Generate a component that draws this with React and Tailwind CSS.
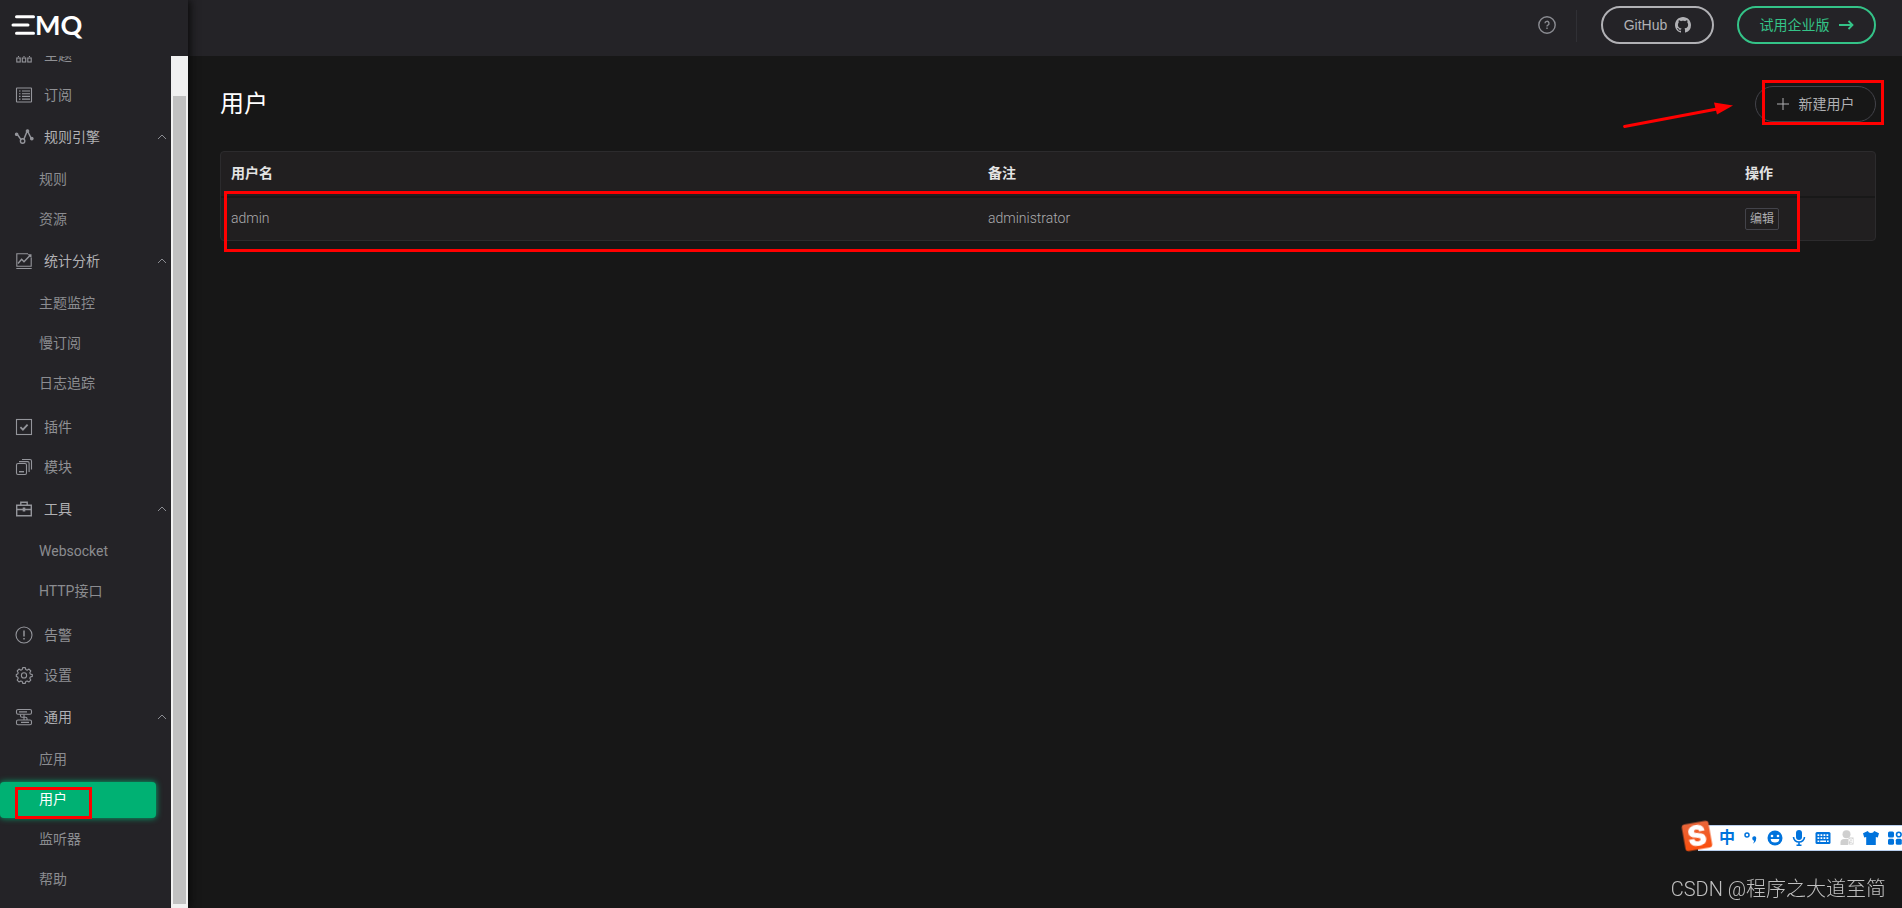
import React, { useState } from "react";
import clsx from "clsx";

const icons = {
  topics: (
    <>
      <path d="M8 1v5M2.5 10V6h11v4M8 6v4" />
      <rect x="0.8" y="11" width="3.4" height="4" />
      <rect x="6.3" y="11" width="3.4" height="4" />
      <rect x="11.8" y="11" width="3.4" height="4" />
    </>
  ),
  subscriptions: (
    <>
      <rect x="0.5" y="1" width="15" height="14" rx="0.5" />
      <path d="M3 4h1.5M6 4h8M3 6.7h1.5M6 6.7h8M3 9.4h1.5M6 9.4h8M3 12.1h1.5M6 12.1h8" />
    </>
  ),
  rules: (
    <>
      <path d="M1.6 5.8L5 10.6M8 10L10.8 3M12 3l3 6" strokeWidth="1.5" />
      <circle cx="6.6" cy="12" r="2.2" strokeWidth="1.4" />
      <circle cx="0.6" cy="5.2" r="1.2" fill="currentColor" />
      <circle cx="11.5" cy="2" r="1.3" fill="currentColor" />
      <circle cx="15.8" cy="9.6" r="1.3" fill="currentColor" />
    </>
  ),
  analysis: (
    <>
      <path d="M12 0.8H0.8v12.4h14.4V5M0.3 15.5h15.4" />
      <path d="M2 10.5l3.6-4.2 2.4 2.5L14 2.4" strokeWidth="1.4" />
      <path d="M11.5 1.2h4v4z" fill="currentColor" stroke="none" />
    </>
  ),
  plugins: (
    <>
      <rect x="0.5" y="0.5" width="15" height="15" />
      <path d="M4.4 8.2l2.5 2.4 4.7-5" strokeWidth="1.8" />
    </>
  ),
  modules: (
    <>
      <rect x="0.5" y="4.5" width="10" height="11" rx="1.5" />
      <path d="M3 2.6h8.6q1.5 0 1.5 1.5v9M6 0.5h8q1.5 0 1.5 1.5v8.5" />
      <path d="M3 12.7h5" strokeWidth="1.4" />
    </>
  ),
  tools: (
    <>
      <path d="M0.7 4.2h14.6v10.5H0.7zM4.8 4V1.2h6.4V4M1 8.5h14" strokeWidth="1.4" />
      <path d="M8 6.5v4" strokeWidth="2.6" />
    </>
  ),
  alarms: (
    <>
      <circle cx="8" cy="8" r="8" />
      <path d="M8 3.5v6M8 11v1.6" strokeWidth="1.5" />
    </>
  ),
  settings: (
    <>
      <path d="M6.7 0.6h2.6l.5 2 1.3.6 1.9-1.1 1.8 1.9-1 1.8.5 1.2 2 .6v1.8l-2 .6-.5 1.2 1 1.9-1.8 1.8-1.9-1-1.3.5-.5 2H6.7l-.5-2-1.3-.5-1.9 1-1.8-1.8 1-1.9-.5-1.2-1.4-.6V7.6l1.4-.6.5-1.2-1-1.8L3 2.1l1.9 1.1 1.3-.6z" strokeLinejoin="round" />
      <circle cx="8" cy="8.4" r="2.6" />
    </>
  ),
  general: (
    <>
      <rect x="0.5" y="0.5" width="15" height="4.8" rx="1.5" />
      <rect x="0.5" y="11" width="15" height="4.8" rx="1.5" />
      <path d="M3 2.9h8M5 13.4h8M4.5 5.5v1.2q0 1.5 1.5 1.5h3.5q1.5 0 1.5 1.3V11M8 5.5v5.5" />
    </>
  ),
};

const menu = [
  { label: "主题", icon: "topics" },
  { label: "订阅", icon: "subscriptions" },
  { label: "规则引擎", icon: "rules", children: ["规则", "资源"] },
  {
    label: "统计分析",
    icon: "analysis",
    children: ["主题监控", "慢订阅", "日志追踪"],
  },
  { label: "插件", icon: "plugins" },
  { label: "模块", icon: "modules" },
  { label: "工具", icon: "tools", children: ["Websocket", "HTTP接口"] },
  { label: "告警", icon: "alarms" },
  { label: "设置", icon: "settings" },
  {
    label: "通用",
    icon: "general",
    children: ["应用", "用户", "监听器", "帮助"],
  },
];

const users = [{ name: "admin", remark: "administrator" }];

const MenuIcon = ({ name }) => (
  <svg
    viewBox="0 0 16 16"
    className="size-4 shrink-0 overflow-visible text-[#94959b]"
    fill="none"
    stroke="currentColor"
    strokeWidth="1.1"
  >
    {icons[name]}
  </svg>
);

const Logo = () => (
  <div className="h-14 shrink-0 flex items-center pl-[11px] pb-[6px] text-white">
    <svg viewBox="0 0 24 20" className="w-6 h-5" stroke="white" strokeWidth="3" strokeLinecap="round">
      <path d="M5.5 1.8h17M2 10h15M5.5 18.2h17" />
    </svg>
    <span className="font-[Lato] font-bold text-[27px] leading-7">MQ</span>
  </div>
);

const SubItem = ({ label, active, onSelect }) => (
  <li className="h-10 flex items-center">
    <a
      href="#"
      onClick={(e) => {
        e.preventDefault();
        onSelect(label);
      }}
      className={clsx(
        "relative h-9 w-39 pl-[39px] pb-0.5 flex items-center rounded",
        active
          ? "bg-[#00b173] text-white shadow-[0_0_6px_#00b173]"
          : "text-[#8b8c90]",
      )}
    >
      {label}
      {active && (
        <span className="absolute left-[15px] top-[5px] w-[77px] h-8 border-3 border-[#ff0000]" />
      )}
    </a>
  </li>
);

const Sidebar = () => {
  const [current, setCurrent] = useState("用户");
  const [closed, setClosed] = useState([]);

  const toggle = (label) =>
    setClosed((prev) =>
      prev.includes(label) ? prev.filter((l) => l !== label) : [...prev, label],
    );

  return (
    <aside className="relative z-10 w-47 shrink-0 flex flex-col bg-[#242327] shadow-[2px_0_8px_#0a0a0a] font-normal">
      <Logo />
      <div className="flex-1 min-h-0 flex">
        <nav className="flex-1 flex flex-col justify-end overflow-hidden pb-1">
          <ul className="shrink-0">
            {menu.map((item) =>
              item.children ? (
                <li key={item.label} className="my-1">
                  <button
                    onClick={() => toggle(item.label)}
                    className="w-full h-9 mb-1 pl-4 pr-1 pb-0.5 flex items-center gap-3 text-[#b0b0b3]"
                  >
                    <MenuIcon name={item.icon} />
                    {item.label}
                    <svg viewBox="0 0 10 6" className="w-[10px] h-[6px] ml-auto" fill="none" stroke="#8b8c92">
                      <path d="M1 5l4-4 4 4" />
                    </svg>
                  </button>
                  {!closed.includes(item.label) && (
                    <ul>
                      {item.children.map((child) => (
                        <SubItem
                          key={child}
                          label={child}
                          active={child === current}
                          onSelect={setCurrent}
                        />
                      ))}
                    </ul>
                  )}
                </li>
              ) : (
                <li key={item.label}>
                  <a href="#" className="h-10 pl-4 pb-0.5 flex items-center gap-3 text-[#8f9094]">
                    <MenuIcon name={item.icon} />
                    {item.label}
                  </a>
                </li>
              ),
            )}
          </ul>
        </nav>
        <div className="w-[17px] bg-[#f1f1f1] pt-10 pb-1 px-[2px]">
          <div className="h-full bg-[#c1c1c1]" />
        </div>
      </div>
    </aside>
  );
};

const Header = () => (
  <header className="h-14 shrink-0 flex items-start justify-end pr-[26px] pt-[6px] bg-[#242327] font-normal font-['Liberation_Sans','Noto_Sans_CJK_SC',sans-serif]">
    <button aria-label="help" className="h-[38px] flex items-center text-[#8b8c92]">
      <svg viewBox="0 0 18 18" className="size-[18px]" fill="none" stroke="currentColor" strokeWidth="1.4">
        <circle cx="9" cy="9" r="8.2" />
        <path d="M7 7.3a2 2 0 1 1 2.9 1.8c-.7.3-.9.6-.9 1.3M9 11.6v1.5" />
      </svg>
    </button>
    <span className="w-px h-8 mt-1 ml-5 mr-6 bg-[#303035]" />
    <a
      href="#"
      className="h-[38px] w-[113px] flex items-center justify-center gap-2 rounded-full border-2 border-[#b1b1b5] text-[#b1b1b5]"
    >
      GitHub
      <svg viewBox="0 0 16 16" className="size-4" fill="currentColor">
        <path d="M8 0C3.58 0 0 3.58 0 8c0 3.54 2.29 6.53 5.47 7.59.4.07.55-.17.55-.38 0-.19-.01-.82-.01-1.49-2.01.37-2.53-.49-2.69-.94-.09-.23-.48-.94-.82-1.13-.28-.15-.68-.52-.01-.53.63-.01 1.08.58 1.23.82.72 1.21 1.87.87 2.33.66.07-.52.28-.87.51-1.07-1.78-.2-3.64-.89-3.64-3.95 0-.87.31-1.59.82-2.15-.08-.2-.36-1.02.08-2.12 0 0 .67-.21 2.2.82.64-.18 1.32-.27 2-.27s1.36.09 2 .27c1.53-1.04 2.2-.82 2.2-.82.44 1.1.16 1.92.08 2.12.51.56.82 1.27.82 2.15 0 3.07-1.87 3.75-3.65 3.95.29.25.54.73.54 1.48 0 1.07-.01 1.93-.01 2.2 0 .21.15.46.55.38A8.01 8.01 0 0 0 16 8c0-4.42-3.58-8-8-8z" />
      </svg>
    </a>
    <a
      href="#"
      className="h-[38px] w-[139px] ml-[23px] flex items-center justify-center gap-2 rounded-full border-2 border-[#34c388] text-[#34c388]"
    >
      试用企业版
      <svg viewBox="0 0 16 16" className="size-4" fill="none" stroke="currentColor" strokeWidth="1.8">
        <path d="M1 8h13.5M10.5 4l4 4-4 4" />
      </svg>
    </a>
  </header>
);

const UsersTable = () => (
  <div className="relative mt-[29px]">
    <div className="rounded border border-[#2c2b2d] bg-[#211f20] overflow-hidden">
      <table className="w-full table-fixed text-left">
        <thead>
          <tr className="h-[45px] border-b-2 border-[#181818] text-[#e4e4e4]">
            <th className="pl-[10px] pb-0.5 font-bold">用户名</th>
            <th className="pl-[10px] pb-0.5 font-bold">备注</th>
            <th className="pl-[10px] pb-0.5 font-bold w-[140px]">操作</th>
          </tr>
        </thead>
        <tbody>
          {users.map((user) => (
            <tr key={user.name} className="h-[43px] text-[#acacae]">
              <td className="pl-[10px] pb-0.5">{user.name}</td>
              <td className="pl-[10px] pb-0.5">{user.remark}</td>
              <td className="pl-[10px]">
                <button className="block h-[22px] px-1 rounded-xs border border-[#43434a] text-xs font-normal">
                  编辑
                </button>
              </td>
            </tr>
          ))}
        </tbody>
      </table>
    </div>
    <div className="absolute left-1 right-[76px] top-10 h-[61px] border-3 border-[#ff0000]" />
  </div>
);

const InputMethodBar = () => (
  <div className="fixed right-0 bottom-[57px] h-[26px] w-[204px] pl-[21px] flex items-center gap-2 bg-white border-y border-[#b9cfee] text-[#0073dc]">
    <svg viewBox="0 0 32 32" className="absolute left-[-17px] top-[-6px] size-8 overflow-visible">
      <defs>
        <linearGradient id="sogou" x1="0" y1="0" x2="0" y2="1">
          <stop offset="0" stopColor="#e8663a" />
          <stop offset="1" stopColor="#fb4e0c" />
        </linearGradient>
      </defs>
      <g transform="rotate(-10 16 16)">
        <rect x="2.5" y="2.5" width="27" height="27" rx="3" fill="url(#sogou)" />
        <text x="16" y="26" textAnchor="middle" fontFamily="Inter, sans-serif" fontWeight="900" fontSize="28" fill="white">
          S
        </text>
      </g>
    </svg>
    <span className="w-4 shrink-0 text-base leading-6 font-bold">中</span>
    <svg viewBox="0 0 16 16" className="size-4 shrink-0">
      <circle cx="4" cy="5" r="2" fill="none" stroke="currentColor" strokeWidth="1.5" />
      <path d="M9.3 8.5a2 2 0 1 1 3.8.6c0 2-1.2 3.9-3.2 4.6.9-1.2 1.2-2 1.2-3.1-1 0-1.8-.9-1.8-2.1z" fill="currentColor" />
    </svg>
    <svg viewBox="0 0 16 16" className="size-4 shrink-0">
      <circle cx="8" cy="8" r="7.5" fill="currentColor" />
      <circle cx="5" cy="6" r="1.3" fill="white" />
      <circle cx="11" cy="6" r="1.3" fill="white" />
      <path d="M3.7 9h8.6a4.3 3.6 0 0 1-8.6 0z" fill="white" />
    </svg>
    <svg viewBox="0 0 16 16" className="size-4 shrink-0">
      <rect x="5" y="0" width="6" height="10" rx="3" fill="currentColor" />
      <path d="M2.5 7a5.5 5 0 0 0 11 0M8 12v4M5.5 15.2h5" fill="none" stroke="currentColor" strokeWidth="1.6" />
    </svg>
    <svg viewBox="0 0 16 16" className="size-4 shrink-0">
      <rect x="0.5" y="2" width="15" height="12" rx="1.5" fill="currentColor" />
      <path d="M2.5 5.2h11M2.5 8.2h11" stroke="white" strokeWidth="1.7" strokeDasharray="1.8 1.2" />
      <path d="M2.5 11.3h1.8M5.2 11.3h5.8M12 11.3h1.7" stroke="white" strokeWidth="1.5" />
    </svg>
    <svg viewBox="0 0 16 16" className="size-4 shrink-0" fill="#cfcfcf">
      <circle cx="7.5" cy="4.3" r="4" />
      <path d="M1.5 15v-2.5q0-3.5 3.5-3.5h4v6z" />
      <path d="M9.5 7.5h5v7h-5z" />
      <path d="M10.7 9h2.6v2.2h-2.6zM13.3 11v2.2h-2.6" fill="none" stroke="white" />
    </svg>
    <svg viewBox="0 0 16 16" className="size-4 shrink-0" fill="currentColor">
      <path d="M4.8 1a3.3 2.5 0 0 0 6.4 0L16 3.2l-1.2 4.2-2-.3V15H3.2V7.1l-2 .3L0 3.2z" />
    </svg>
    <svg viewBox="0 0 16 16" className="size-4 shrink-0" fill="currentColor">
      <rect x="1" y="1.5" width="6" height="6" rx="1.5" />
      <circle cx="11.8" cy="4.5" r="2.3" fill="none" stroke="currentColor" strokeWidth="1.6" />
      <rect x="1" y="8.8" width="6" height="6" rx="1.5" />
      <rect x="8.8" y="8.8" width="6" height="6" rx="1.5" />
    </svg>
  </div>
);

const App = () => {
  return (
    <div className="h-screen flex overflow-hidden bg-[#171717] text-sm font-light font-['Roboto','Noto_Sans_CJK_SC',sans-serif]">
      <Sidebar />
      <div className="flex-1 min-w-0 flex flex-col">
        <Header />
        <main className="flex-1 pl-8 pr-[26px] pt-[29px]">
          <div className="flex items-center justify-between">
            <h1 className="text-2xl leading-9 font-normal text-white">用户</h1>
            <div className="relative">
              <button className="h-9 w-[121px] mt-[1px] flex items-center justify-center gap-[10px] rounded-full border border-[#43434a] text-[#b0b0b3] font-normal">
                <svg viewBox="0 0 12 12" className="size-3" fill="none" stroke="currentColor">
                  <path d="M6 0v12M0 6h12" />
                </svg>
                新建用户
              </button>
              <div className="absolute left-[7px] -right-2 -top-[5px] h-[45px] border-3 border-[#ff0000]" />
              <svg viewBox="0 0 110 24" className="absolute right-[143px] top-5 w-[110px] h-6 overflow-visible">
                <path d="M1.5 21.5L94 4" stroke="#ff0000" strokeWidth="2.8" strokeLinecap="round" />
                <path d="M110 0.5L91 -2.5L94 9.5z" fill="#ff0000" />
              </svg>
            </div>
          </div>
          <UsersTable />
        </main>
      </div>
      <InputMethodBar />
      <p className="fixed right-4 bottom-[3px] text-xl leading-8 text-[#c0c0c0]">
        CSDN @程序之大道至简
      </p>
    </div>
  );
};

export default App;
